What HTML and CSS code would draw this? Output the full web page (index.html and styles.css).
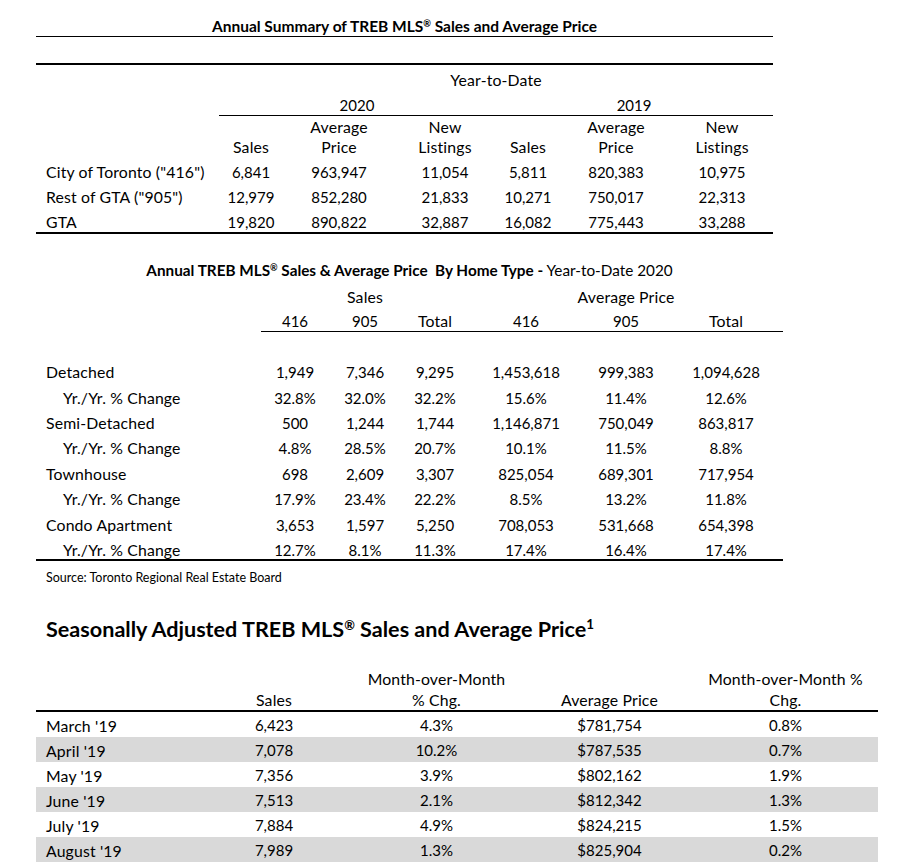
FILE: index.html
```html
<!DOCTYPE html>
<html lang="en">
<head>
<meta charset="utf-8">
<title>TREB MLS Sales and Average Price</title>
<link rel="stylesheet" href="styles.css">
</head>
<body>
<section class="summary">
  <h1 class="summary-title">Annual Summary of TREB MLS<span class="reg">®</span> Sales and Average Price</h1>
  <table class="t1">
    <colgroup>
      <col class="t1-lab"><col class="t1-a"><col class="t1-b"><col class="t1-c"><col class="t1-d"><col class="t1-e"><col class="t1-f">
    </colgroup>
    <tr class="t1-ytd"><td></td><td colspan="6" class="txt">Year-to-Date</td></tr>
    <tr class="t1-years"><td></td><td colspan="3" class="rule">2020</td><td colspan="3" class="rule">2019</td></tr>
    <tr class="t1-heads txt"><td></td><td><br>Sales</td><td>Average<br>Price</td><td>New<br>Listings</td><td><br>Sales</td><td>Average<br>Price</td><td>New<br>Listings</td></tr>
    <tr class="t1-data"><td class="lab">City of Toronto ("416")</td><td>6,841</td><td>963,947</td><td>11,054</td><td>5,811</td><td>820,383</td><td>10,975</td></tr>
    <tr class="t1-data"><td class="lab">Rest of GTA ("905")</td><td>12,979</td><td>852,280</td><td>21,833</td><td>10,271</td><td>750,017</td><td>22,313</td></tr>
    <tr class="t1-data"><td class="lab">GTA</td><td>19,820</td><td>890,822</td><td>32,887</td><td>16,082</td><td>775,443</td><td>33,288</td></tr>
  </table>
</section>

<section class="hometype">
  <h2 class="hometype-title"><b>Annual TREB MLS<span class="reg">®</span> Sales &amp; Average Price&nbsp; By Home Type -</b> Year-to-Date 2020</h2>
  <table class="t2">
    <colgroup>
      <col class="t2-lab"><col class="t2-a"><col class="t2-b"><col class="t2-c"><col class="t2-d"><col class="t2-e"><col class="t2-f">
    </colgroup>
    <tr class="t2-group txt"><td></td><td colspan="3">Sales</td><td colspan="3">Average Price</td></tr>
    <tr class="t2-cols"><td></td><td class="rule">416</td><td class="rule">905</td><td class="rule txt">Total</td><td class="rule">416</td><td class="rule">905</td><td class="rule txt">Total</td></tr>
    <tr class="t2-spacer"><td colspan="7"></td></tr>
    <tr class="t2-data"><td class="lab">Detached</td><td>1,949</td><td>7,346</td><td>9,295</td><td>1,453,618</td><td>999,383</td><td>1,094,628</td></tr>
    <tr class="t2-data"><td class="sub">Yr./Yr. % Change</td><td>32.8%</td><td>32.0%</td><td>32.2%</td><td>15.6%</td><td>11.4%</td><td>12.6%</td></tr>
    <tr class="t2-data"><td class="lab">Semi-Detached</td><td>500</td><td>1,244</td><td>1,744</td><td>1,146,871</td><td>750,049</td><td>863,817</td></tr>
    <tr class="t2-data"><td class="sub">Yr./Yr. % Change</td><td>4.8%</td><td>28.5%</td><td>20.7%</td><td>10.1%</td><td>11.5%</td><td>8.8%</td></tr>
    <tr class="t2-data"><td class="lab">Townhouse</td><td>698</td><td>2,609</td><td>3,307</td><td>825,054</td><td>689,301</td><td>717,954</td></tr>
    <tr class="t2-data"><td class="sub">Yr./Yr. % Change</td><td>17.9%</td><td>23.4%</td><td>22.2%</td><td>8.5%</td><td>13.2%</td><td>11.8%</td></tr>
    <tr class="t2-data"><td class="lab">Condo Apartment</td><td>3,653</td><td>1,597</td><td>5,250</td><td>708,053</td><td>531,668</td><td>654,398</td></tr>
    <tr class="t2-data"><td class="sub">Yr./Yr. % Change</td><td>12.7%</td><td>8.1%</td><td>11.3%</td><td>17.4%</td><td>16.4%</td><td>17.4%</td></tr>
  </table>
  <p class="source">Source: Toronto Regional Real Estate Board</p>
</section>

<section class="seasonal">
  <h2 class="seasonal-title">Seasonally Adjusted TREB MLS<span class="reg">®</span> Sales and Average Price<span class="fn">1</span></h2>
  <table class="t3">
    <colgroup>
      <col class="t3-lab"><col class="t3-a"><col class="t3-b"><col class="t3-c"><col class="t3-d">
    </colgroup>
    <tr class="t3-head txt"><td></td><td>Sales</td><td>Month-over-Month<br>% Chg.</td><td>Average Price</td><td class="last">Month-over-Month %<br>Chg.</td></tr>
    <tr class="t3-row"><td class="lab">March '19</td><td>6,423</td><td>4.3%</td><td>$781,754</td><td class="last">0.8%</td></tr>
    <tr class="t3-row shade"><td class="lab">April '19</td><td>7,078</td><td>10.2%</td><td>$787,535</td><td class="last">0.7%</td></tr>
    <tr class="t3-row"><td class="lab">May '19</td><td>7,356</td><td>3.9%</td><td>$802,162</td><td class="last">1.9%</td></tr>
    <tr class="t3-row shade"><td class="lab">June '19</td><td>7,513</td><td>2.1%</td><td>$812,342</td><td class="last">1.3%</td></tr>
    <tr class="t3-row"><td class="lab">July '19</td><td>7,884</td><td>4.9%</td><td>$824,215</td><td class="last">1.5%</td></tr>
    <tr class="t3-row shade"><td class="lab">August '19</td><td>7,989</td><td>1.3%</td><td>$825,904</td><td class="last">0.2%</td></tr>
  </table>
</section>
</body>
</html>
```

FILE: styles.css
```css
html, body {
  margin: 0;
  padding: 0;
  background: #fff;
}
body {
  font-family: Lato, "Open Sans", sans-serif;
  font-size: 15px;
  color: #000;
  overflow: hidden;
}
table {
  border-collapse: separate;
  border-spacing: 0;
  table-layout: fixed;
}
td {
  padding: 0;
  text-align: center;
  white-space: nowrap;
  vertical-align: top;
}
.txt, .txt td {
  font-size: 15.8px;
  letter-spacing: 0.15px;
}
td.lab {
  text-align: left;
  padding-left: 10px;
  font-size: 15.8px;
  letter-spacing: 0.15px;
}
td.sub {
  text-align: left;
  padding-left: 27px;
  font-size: 15.8px;
  letter-spacing: 0.15px;
}
.reg {
  font-size: 0.6em;
  vertical-align: 0.55em;
  line-height: 0;
}
.fn {
  font-size: 0.62em;
  vertical-align: 0.6em;
  line-height: 0;
}

/* ---------- Section 1 ---------- */
.summary {
  margin-left: 36px;
  width: 737px;
}
.summary-title {
  margin: 0;
  padding-top: 16px;
  font-size: 15.5px;
  line-height: 20px;
  font-weight: 700;
  text-align: center;
  border-bottom: 1px solid #000;
}
.t1 {
  width: 737px;
  margin-top: 26px;
  border-top: 2px solid #000;
  border-bottom: 2px solid #000;
}
.t1-lab { width: 183px; }
.t1-a { width: 64px; }
.t1-b { width: 112px; }
.t1-c { width: 100px; }
.t1-d { width: 66px; }
.t1-e { width: 110px; }
.t1-f { width: 102px; }
.t1 td { line-height: 20px; }
.t1-ytd td { padding: 5px 0 2px; }
.t1-years td { padding-top: 3px; }
.t1-years td.rule { border-bottom: 1px solid #000; }
.t1-heads td { padding-top: 1px; }
.t1-data td { padding-top: 5px; }

/* ---------- Section 2 ---------- */
.hometype {
  margin-left: 36px;
  margin-top: 26px;
  width: 747px;
}
.hometype-title {
  margin: 0;
  font-size: 15.3px;
  line-height: 20px;
  font-weight: 400;
  text-align: center;
}
.hometype-title b { font-weight: 700; }
.t2 {
  width: 747px;
  margin-top: 7px;
  border-bottom: 2px solid #000;
}
.t2-lab { width: 225px; }
.t2-a { width: 68px; }
.t2-b { width: 72px; }
.t2-c { width: 68px; }
.t2-d { width: 114px; }
.t2-e { width: 86px; }
.t2-f { width: 114px; }
.t2 td { line-height: 20px; }
.t2-cols td { padding-top: 4px; }
.t2-cols td.rule { border-bottom: 1px solid #000; }
.t2-spacer td { height: 23.8px; }
.t2-data td {
  padding-top: 7.4px;
  line-height: 18px;
}
.source {
  margin: 9px 0 0;
  padding-left: 10px;
  font-size: 12.5px;
  line-height: 16px;
}

/* ---------- Section 3 ---------- */
.seasonal {
  margin-left: 36px;
  margin-top: 30px;
  width: 842px;
}
.seasonal-title {
  margin: 0;
  padding-left: 10px;
  font-size: 21.6px;
  line-height: 26px;
  font-weight: 700;
}
.t3 {
  width: 842px;
  margin-top: 26px;
}
.t3-lab { width: 184px; }
.t3-a { width: 108px; }
.t3-b { width: 217px; }
.t3-c { width: 129px; }
.t3-d { width: 204px; }
.t3 td.last { padding-left: 19px; }
.t3-head td {
  line-height: 21px;
  vertical-align: bottom;
  border-bottom: 2px solid #000;
}
.t3-row td {
  line-height: 23px;
  padding-top: 2px;
}
.t3-row.shade td { background: #d9d9d9; }
```
